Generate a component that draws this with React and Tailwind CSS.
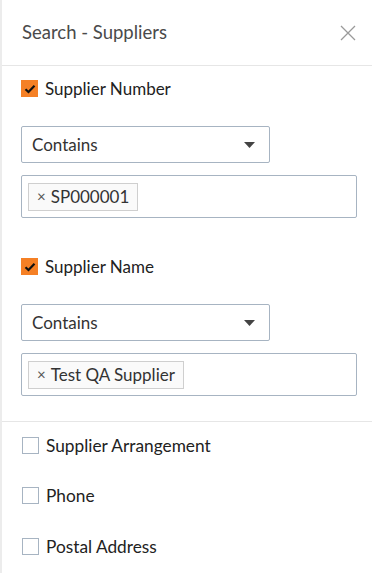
import React from "react";

const CheckBox = ({ checked }) =>
  checked ? (
    <span className="flex h-[17px] w-[17px] items-center justify-center bg-[#f58025]">
      <svg width="12" height="10" viewBox="0 0 12 10">
        <path d="M1.5 5.2 L4.5 8 L10.5 1.8" fill="none" stroke="#111" strokeWidth="2.2" />
      </svg>
    </span>
  ) : (
    <span className="h-[17px] w-[17px] border border-[#a7b4c2] bg-white" />
  );

const Field = ({ label, value }) => (
  <div className="flex flex-col">
    <div className="flex items-center gap-[7px]">
      <CheckBox checked />
      <span className="text-[17px] leading-none text-[#222]">{label}</span>
    </div>
    <div className="mt-[29px] flex h-[37px] w-[249px] items-center justify-between rounded-[2px] border border-[#a7b4c2] pl-[10px] pr-[14px]">
      <span className="text-[17px] text-[#333]">Contains</span>
      <svg width="11" height="6" viewBox="0 0 11 6">
        <path d="M0 0 H11 L5.5 6 Z" fill="#444" />
      </svg>
    </div>
    <div className="mt-[12px] flex h-[43px] w-[336px] items-center rounded-[2px] border border-[#a7b4c2] px-[6px]">
      <span className="flex h-[28px] items-center gap-[5px] border border-[#cfcfcf] bg-[#fafafa] px-[8px] text-[17px] text-[#333]">
        <span className="text-[15px] text-[#555]">×</span>
        {value}
      </span>
    </div>
  </div>
);

const Option = ({ label }) => (
  <div className="flex items-center gap-[7px]">
    <CheckBox />
    <span className="text-[17.3px] leading-none text-[#222]">{label}</span>
  </div>
);

export default function App() {
  return (
    <div className="h-[573px] w-[372px] bg-[#ececec] pl-[2px] font-['Lato','Liberation_Sans',sans-serif]">
      <div className="flex h-full flex-col bg-white">
        <div className="flex h-[66px] items-center justify-between border-b border-[#e6e6e6] pl-[20px] pr-[16px]">
          <span className="text-[18.5px] text-[#4a4a4a]">Search - Suppliers</span>
          <svg width="16" height="16" viewBox="0 0 16 16">
            <path d="M1 1 L15 15 M15 1 L1 15" stroke="#9a9a9a" strokeWidth="1.3" />
          </svg>
        </div>
        <div className="flex flex-col gap-[40px] border-b border-[#e6e6e6] pb-[25px] pl-[19px] pt-[14px]">
          <Field label="Supplier Number" value="SP000001" />
          <Field label="Supplier Name" value="Test QA Supplier" />
        </div>
        <div className="flex flex-col gap-[33px] pl-[20px] pt-[15px]">
          <Option label="Supplier Arrangement" />
          <Option label="Phone" />
          <Option label="Postal Address" />
        </div>
      </div>
    </div>
  );
}
